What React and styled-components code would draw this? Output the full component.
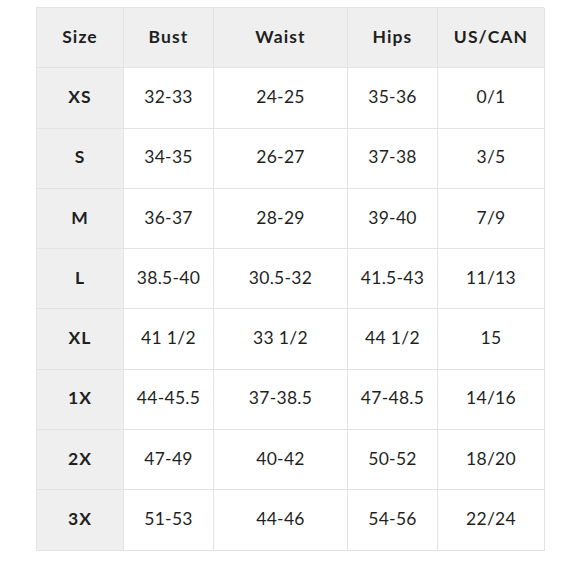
import React from 'react';
import styled, { createGlobalStyle } from 'styled-components';

const GlobalStyle = createGlobalStyle`
  body {
    margin: 0;
    background: #fff;
    font-family: 'Lato', 'Liberation Sans', sans-serif;
    color: #222;
  }
`;

const Page = styled.div`
  padding: 7px 36px;
`;

const Chart = styled.div`
  display: grid;
  grid-template-columns: 87px 90px 134px 90px 107px;
  grid-auto-rows: 60.3px;
  width: 508px;
  border-left: 1px solid #e3e3e3;
  border-top: 1px solid #e3e3e3;
  box-sizing: border-box;
`;

const Cell = styled.div`
  display: flex;
  align-items: center;
  justify-content: center;
  padding-bottom: 3px;
  border-right: 1px solid #e3e3e3;
  border-bottom: 1px solid #e3e3e3;
  background: ${(p) => (p.$shade ? '#efefef' : '#fff')};
  font-size: 17.5px;
  font-weight: ${(p) => (p.$bold ? 700 : 400)};
  letter-spacing: ${(p) => (p.$head ? '1.1px' : '0.3px')};
  color: #1f1f1f;
`;

const headers = ['Size', 'Bust', 'Waist', 'Hips', 'US/CAN'];

const rows = [
  ['XS', '32-33', '24-25', '35-36', '0/1'],
  ['S', '34-35', '26-27', '37-38', '3/5'],
  ['M', '36-37', '28-29', '39-40', '7/9'],
  ['L', '38.5-40', '30.5-32', '41.5-43', '11/13'],
  ['XL', '41 1/2', '33 1/2', '44 1/2', '15'],
  ['1X', '44-45.5', '37-38.5', '47-48.5', '14/16'],
  ['2X', '47-49', '40-42', '50-52', '18/20'],
  ['3X', '51-53', '44-46', '54-56', '22/24'],
];

const App = () => (
  <Page>
    <GlobalStyle />
    <Chart>
      {headers.map((h) => (
        <Cell key={h} $shade $bold $head>
          {h}
        </Cell>
      ))}
      {rows.map((row) =>
        row.map((val, i) => (
          <Cell key={row[0] + i} $shade={i === 0} $bold={i === 0} $head={i === 0}>
            {val}
          </Cell>
        ))
      )}
    </Chart>
  </Page>
);

export default App;
